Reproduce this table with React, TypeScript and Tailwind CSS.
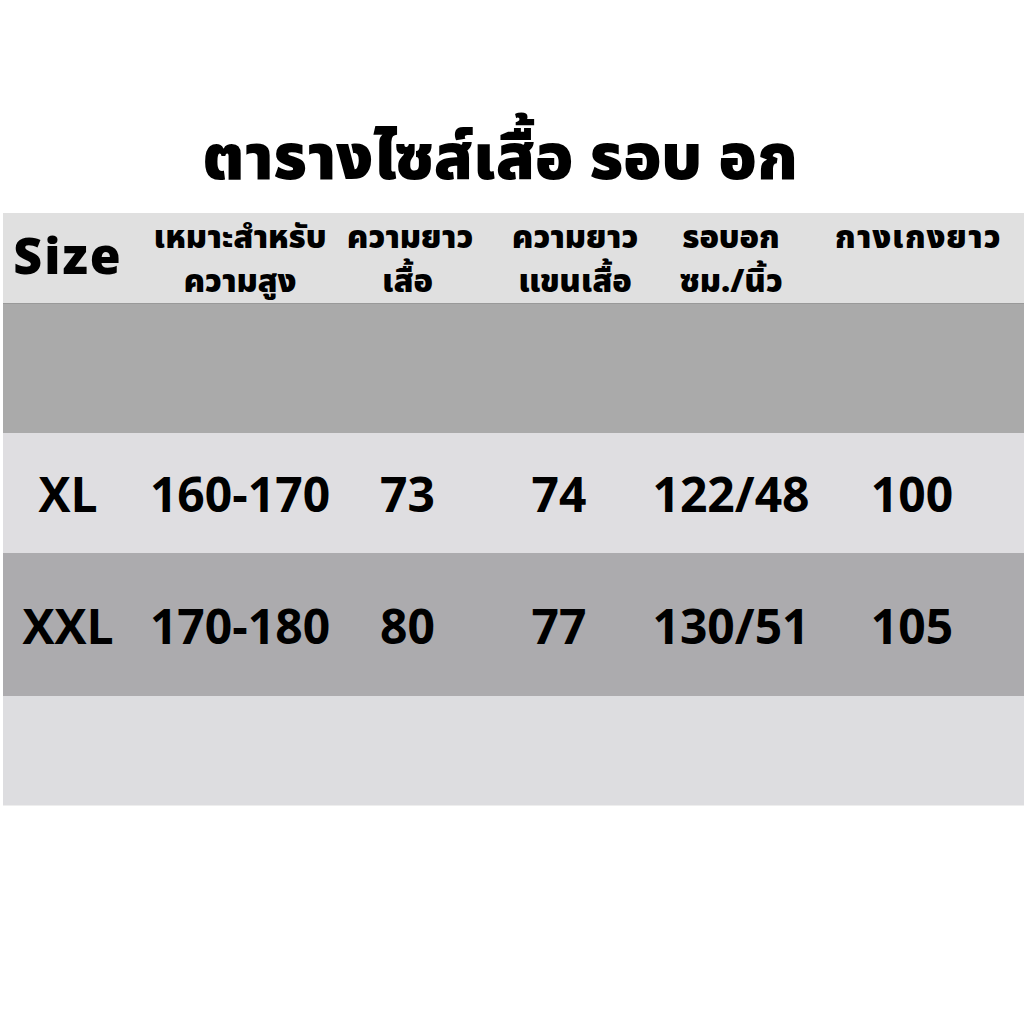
import React from "react";

const cols = ["w-[130px]", "w-[214px]", "w-[121px]", "w-[182px]", "w-[162px]", "flex-1"];

const rows = [
  { size: "XL", height: "160-170", shirt: "73", sleeve: "74", chest: "122/48", pants: "100", bg: "bg-[#dfdee1]", h: "h-[120px]" },
  { size: "XXL", height: "170-180", shirt: "80", sleeve: "77", chest: "130/51", pants: "105", bg: "bg-[#acabae]", h: "h-[143px]" },
];

const head = "text-center text-[32px] leading-[44px] self-start whitespace-nowrap pt-[3px]";

export default function App() {
  return (
    <div
      className="w-[1024px] h-[1024px] bg-white text-black"
      style={{ fontFamily: '"Noto Sans Thai", "Noto Sans", "Liberation Sans", sans-serif' }}
    >
      {/* TITLE */}
      <div className="h-[213px] flex items-end justify-center pb-[22px] pr-[24px]">
        <h1 className="text-[63px] font-black leading-none">ตารางไซส์เสื้อ รอบ อก</h1>
      </div>

      <div className="ml-[3px]">
        {/* HEADER */}
        <div className="h-[91px] bg-[#e0e0e0] flex items-center font-black border-b border-[#999]">
          <div className={`${cols[0]} text-center text-[50px] leading-none tracking-[2px] pt-[2px]`}>Size</div>
          <div className={`${cols[1]} ${head}`}>
            <div>เหมาะสำหรับ</div>
            <div>ความสูง</div>
          </div>
          <div className={`${cols[2]} ${head}`}>
            <div>ความยาว</div>
            <div>เสื้อ</div>
          </div>
          <div className={`${cols[3]} ${head} pl-[32px]`}>
            <div>ความยาว</div>
            <div>แขนเสื้อ</div>
          </div>
          <div className={`${cols[4]} ${head}`}>
            <div>รอบอก</div>
            <div>ซม./นิ้ว</div>
          </div>
          <div className={`${cols[5]} ${head} tracking-[1px]`}>
            <div>กางเกงยาว</div>
          </div>
        </div>

        {/* EMPTY DARK BAND */}
        <div className="h-[129px] bg-[#aaaaaa]" />

        {/* DATA ROWS */}
        {rows.map((r) => (
          <div key={r.size} className={`${r.h} ${r.bg} flex items-center font-bold text-[48px] leading-none pt-[10px]`}>
            <div className={`${cols[0]} text-center`}>{r.size}</div>
            <div className={`${cols[1]} text-center`}>{r.height}</div>
            <div className={`${cols[2]} text-center`}>{r.shirt}</div>
            <div className={`${cols[3]} text-center`}>{r.sleeve}</div>
            <div className={`${cols[4]} text-center`}>{r.chest}</div>
            <div className={`${cols[5]} text-center pr-[12px]`}>{r.pants}</div>
          </div>
        ))}

        {/* EMPTY LIGHT BAND */}
        <div className="h-[110px] bg-[#dddde0] border-b border-[#eee]" />
      </div>
    </div>
  );
}
